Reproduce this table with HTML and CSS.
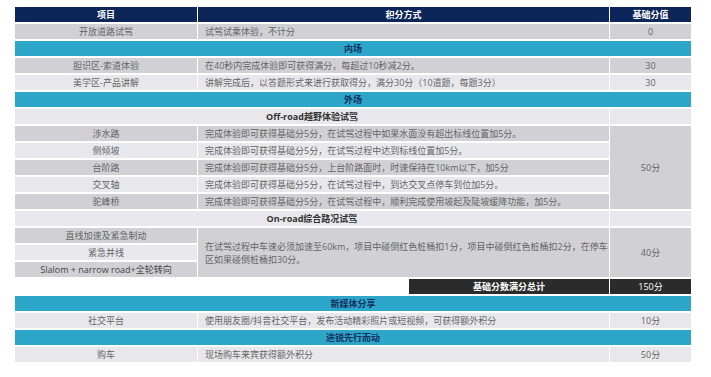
FILE: index.html
```html
<!DOCTYPE html>
<html lang="zh-CN">
<head>
  <meta charset="UTF-8" />
  <title>积分规则</title>
  <link rel="stylesheet" href="styles.css">
</head>
<body>
  <div class="page">
    <table class="score">
      <colgroup>
        <col class="c-item">
        <col class="c-rule">
        <col class="c-base">
      </colgroup>
      <tr class="head">
        <td>项目</td>
        <td>积分方式</td>
        <td>基础分值</td>
      </tr>
      <tr class="dark">
        <td>开放道路试驾</td>
        <td class="rule">试驾试乘体验，不计分</td>
        <td>0</td>
      </tr>
      <tr class="section"><td colspan="3">内场</td></tr>
      <tr class="dark">
        <td>胆识区-索道体验</td>
        <td class="rule">在40秒内完成体验即可获得满分，每超过10秒减2分。</td>
        <td>30</td>
      </tr>
      <tr class="light">
        <td>美学区-产品讲解</td>
        <td class="rule">讲解完成后，以答题形式来进行获取得分，满分30分（10道题，每题3分）</td>
        <td>30</td>
      </tr>
      <tr class="section"><td colspan="3">外场</td></tr>
      <tr class="light sub">
        <td colspan="2">Off-road越野体验试驾</td>
        <td></td>
      </tr>
      <tr class="dark">
        <td>涉水路</td>
        <td class="rule">完成体验即可获得基础分5分，在试驾过程中如果水面没有超出标线位置加5分。</td>
        <td rowspan="5" class="merged">50分</td>
      </tr>
      <tr class="light">
        <td>侧倾坡</td>
        <td class="rule">完成体验即可获得基础分5分，在试驾过程中达到标线位置加5分。</td>
      </tr>
      <tr class="dark">
        <td>台阶路</td>
        <td class="rule">完成体验即可获得基础分5分，上台阶路面时，时速保持在10km以下，加5分</td>
      </tr>
      <tr class="light">
        <td>交叉轴</td>
        <td class="rule">完成体验即可获得基础分5分，在试驾过程中，到达交叉点停车到位加5分。</td>
      </tr>
      <tr class="dark">
        <td>驼峰桥</td>
        <td class="rule">完成体验即可获得基础分5分，在试驾过程中，顺利完成使用坡起及陡坡缓降功能，加5分。</td>
      </tr>
      <tr class="light sub">
        <td colspan="2">On-road综合路况试驾</td>
        <td></td>
      </tr>
      <tr class="dark">
        <td>直线加速及紧急制动</td>
        <td rowspan="3" class="rule multi">在试驾过程中车速必须加速至60km，项目中碰倒红色桩桶扣1分，项目中碰倒红色桩桶扣2分，在停车<br>区如果碰倒桩桶扣30分。</td>
        <td rowspan="3" class="merged">40分</td>
      </tr>
      <tr class="light">
        <td>紧急并线</td>
      </tr>
      <tr class="dark">
        <td class="latin">Slalom + narrow road+全轮转向</td>
      </tr>
      <tr class="total">
        <td colspan="2" class="total-cell"><div class="total-label">基础分数满分总计</div></td>
        <td class="total-value">150分</td>
      </tr>
      <tr class="section"><td colspan="3">新媒体分享</td></tr>
      <tr class="light">
        <td>社交平台</td>
        <td class="rule">使用朋友圈/抖音社交平台，发布活动精彩照片或短视频，可获得额外积分</td>
        <td>10分</td>
      </tr>
      <tr class="section"><td colspan="3">途锐先行而动</td></tr>
      <tr class="light">
        <td>购车</td>
        <td class="rule">现场购车来宾获得额外积分</td>
        <td>50分</td>
      </tr>
    </table>
  </div>
</body>
</html>
```

FILE: styles.css
```css
body {
  margin: 0;
  background: #fff;
  font-family: "Open Sans", "Noto Sans CJK SC", sans-serif;
  color: #646464;
}

.page {
  padding: 5px 0 0 14px;
}

.score {
  width: 677px;
  table-layout: fixed;
  border-collapse: collapse;
  font-size: 9px;
}

.c-item { width: 183px; }
.c-rule { width: 412px; }
.c-base { width: 82px; }

.score td {
  padding: 0;
  line-height: 15px;
  height: 15px;
  text-align: center;
  white-space: nowrap;
  border-top: 2px solid #fff;
  border-bottom: 0;
  border-left: 1px solid #fff;
  border-right: 1px solid #fff;
}

.score td.rule {
  text-align: left;
  padding-left: 7px;
}

.head td {
  background: #0d2659;
  color: #fff;
  font-weight: 700;
}

.dark td {
  background: #d1d1d5;
}

.light td {
  background: #e8e8ec;
}

.section td {
  background: #2ea6ca;
  color: #13305e;
  font-weight: 700;
}

.sub td {
  color: #333;
  font-weight: 700;
}

td.merged {
  background: #d1d1d5 !important;
}

td.multi {
  background: #d1d1d5 !important;
  white-space: nowrap;
  line-height: 13px !important;
  vertical-align: middle;
}

td.latin {
  color: #444;
}

.total td {
  background: #fff;
}

.score td.total-cell {
  padding: 0;
}

.total-label {
  margin-left: auto;
  width: 200px;
  height: 15px;
  background: #2b2b2b;
  color: #fff;
  font-weight: 700;
}

.score .total td.total-value {
  background: #2b2b2b;
  color: #fff;
}
```
